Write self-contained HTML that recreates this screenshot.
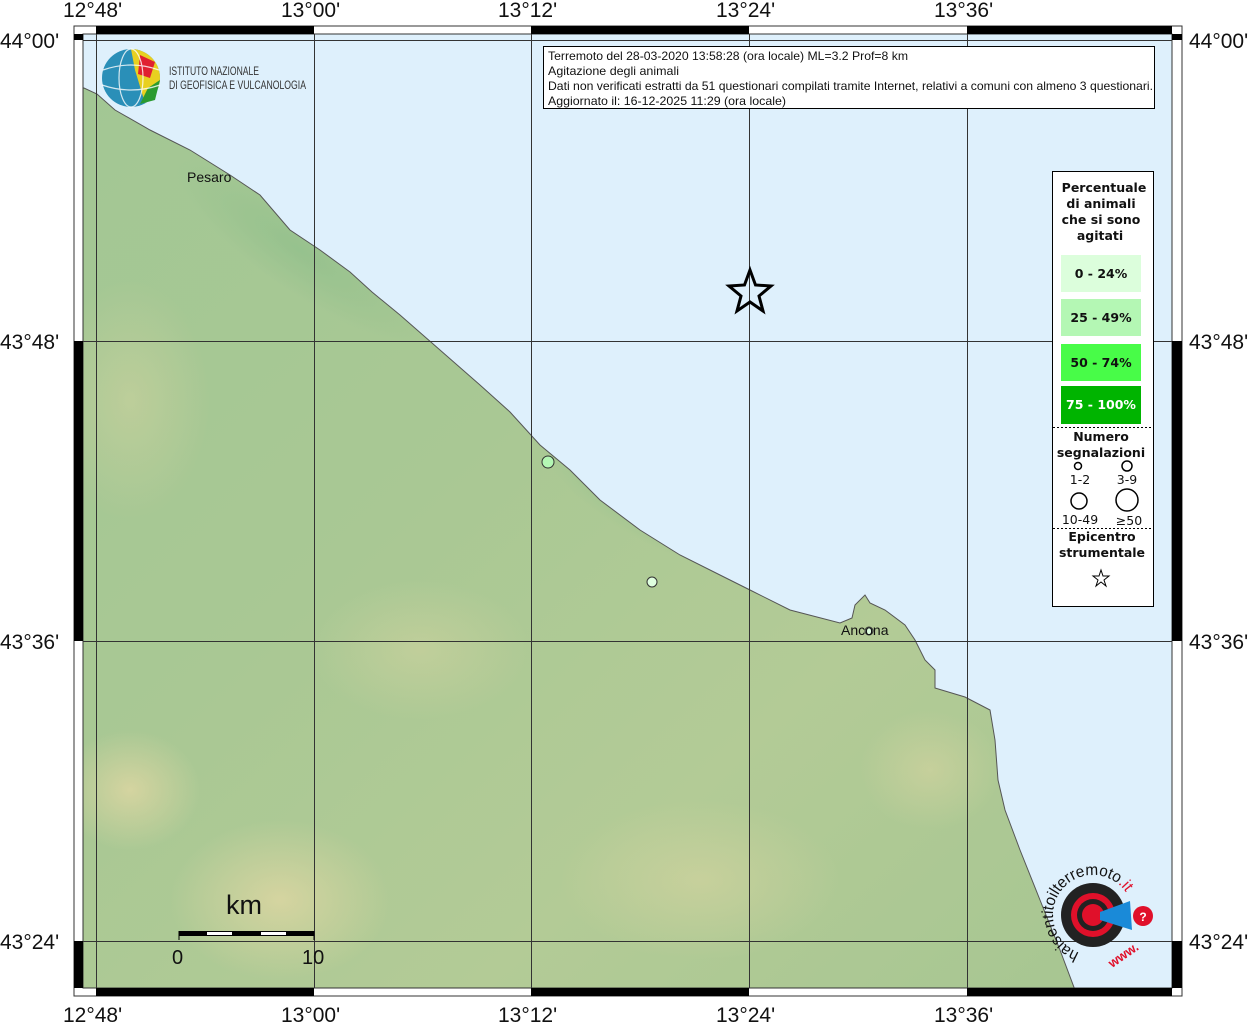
<!DOCTYPE html>
<html><head><meta charset="utf-8"><style>
html,body{margin:0;padding:0;background:#fff;width:1255px;height:1024px;overflow:hidden}
svg{display:block}
</style></head><body>
<svg width="1255" height="1024" xmlns="http://www.w3.org/2000/svg" font-family="Liberation Sans, sans-serif">
<defs>
<linearGradient id="land" x1="0" y1="0" x2="1" y2="1">
<stop offset="0" stop-color="#a2c794"/>
<stop offset="0.4" stop-color="#a9c894"/>
<stop offset="0.7" stop-color="#b3cb96"/>
<stop offset="1" stop-color="#a7c692"/>
</linearGradient>
<radialGradient id="tan1" cx="0.5" cy="0.5" r="0.5"><stop offset="0" stop-color="#dcd6a2" stop-opacity="0.85"/><stop offset="1" stop-color="#dcd6a2" stop-opacity="0"/></radialGradient>
<radialGradient id="grn" cx="0.5" cy="0.5" r="0.5"><stop offset="0" stop-color="#92c08c" stop-opacity="0.8"/><stop offset="1" stop-color="#92c08c" stop-opacity="0"/></radialGradient>
<clipPath id="mapclip"><rect x="83" y="34" width="1089" height="954"/></clipPath>
</defs>
<rect x="83" y="34" width="1089" height="954" fill="#def0fc"/>
<g clip-path="url(#mapclip)">
<clipPath id="landclip"><path id="coast" d="M70,88 L84,88 L97,94 L115,110 L150,130 L190,150 L230,175 L260,195 L290,230 L320,250 L350,272 L372,292 L400,315 L440,350 L480,385 L510,412 L540,445 L570,470 L600,500 L640,530 L680,555 L720,575 L750,590 L790,610 L840,623 L852,618 L855,605 L865,595 L870,603 L885,610 L905,625 L915,640 L925,660 L935,670 L935,688 L965,697 L990,710 L995,740 L998,780 L1005,810 L1020,850 L1040,900 L1060,950 L1075,990 L70,990 Z"/></clipPath>
<g clip-path="url(#landclip)">
<rect x="70" y="80" width="1010" height="910" fill="url(#land)"/>
<ellipse cx="130" cy="790" rx="70" ry="60" fill="url(#tan1)"/>
<ellipse cx="280" cy="900" rx="110" ry="80" fill="url(#tan1)"/>
<ellipse cx="130" cy="400" rx="80" ry="120" fill="url(#tan1)" opacity="0.5"/>
<ellipse cx="700" cy="880" rx="140" ry="80" fill="url(#tan1)" opacity="0.6"/>
<ellipse cx="930" cy="770" rx="70" ry="60" fill="url(#tan1)" opacity="0.6"/>
<ellipse cx="420" cy="650" rx="110" ry="70" fill="url(#tan1)" opacity="0.5"/>
<ellipse cx="650" cy="500" rx="120" ry="40" fill="url(#grn)" transform="rotate(30 650 500)"/>
<ellipse cx="300" cy="250" rx="150" ry="40" fill="url(#grn)" transform="rotate(35 300 250)"/>
</g>
<use href="#coast" fill="none" stroke="#555" stroke-width="1"/>
</g>
<g stroke="#333" stroke-width="1">
<line x1="96.5" y1="34" x2="96.5" y2="988"/><line x1="314.5" y1="34" x2="314.5" y2="988"/><line x1="531.5" y1="34" x2="531.5" y2="988"/><line x1="749.5" y1="34" x2="749.5" y2="988"/><line x1="967.5" y1="34" x2="967.5" y2="988"/>
<line x1="83" y1="40.5" x2="1172" y2="40.5"/><line x1="83" y1="341.5" x2="1172" y2="341.5"/><line x1="83" y1="641.5" x2="1172" y2="641.5"/><line x1="83" y1="941.5" x2="1172" y2="941.5"/>
</g>
<rect x="74" y="26" width="1108" height="970" fill="none" stroke="#333" stroke-width="1"/>
<rect x="83" y="34" width="1089" height="954" fill="none" stroke="#333" stroke-width="1"/>
<g fill="#000">
<rect x="96" y="26" width="218" height="8"/><rect x="531" y="26" width="218" height="8"/><rect x="967" y="26" width="205" height="8"/>
<rect x="96" y="988" width="218" height="8"/><rect x="531" y="988" width="218" height="8"/><rect x="967" y="988" width="205" height="8"/>
<rect x="74" y="34" width="9" height="6"/><rect x="74" y="341" width="9" height="300"/><rect x="74" y="941" width="9" height="47"/>
<rect x="1172" y="34" width="10" height="6"/><rect x="1172" y="341" width="10" height="300"/><rect x="1172" y="941" width="10" height="47"/>
</g>
<g font-size="21" fill="#111">
<text x="63" y="17">12°48'</text><text x="281" y="17">13°00'</text><text x="498" y="17">13°12'</text><text x="716" y="17">13°24'</text><text x="934" y="17">13°36'</text>
<text x="63" y="1022">12°48'</text><text x="281" y="1022">13°00'</text><text x="498" y="1022">13°12'</text><text x="716" y="1022">13°24'</text><text x="934" y="1022">13°36'</text>
<text x="0" y="48">44°00'</text><text x="0" y="349">43°48'</text><text x="0" y="649">43°36'</text><text x="0" y="949">43°24'</text>
<text x="1189" y="48">44°00'</text><text x="1189" y="349">43°48'</text><text x="1189" y="649">43°36'</text><text x="1189" y="949">43°24'</text>
</g>
<circle cx="131" cy="78" r="29" fill="#2a8fb8"/>
<path d="M131,49 A29,29 0 0 1 160,78 A29,29 0 0 1 145,103 L135,70 Z" fill="#e8d020"/>
<path d="M140,55 L155,62 L150,78 L138,74 Z" fill="#e02030"/>
<path d="M148,88 L160,80 L155,100 L140,104 Z" fill="#2a9a30"/>
<g stroke="#fff" stroke-width="1.2" fill="none" opacity="0.8"><ellipse cx="131" cy="78" rx="12" ry="29"/><path d="M103,70 Q131,60 159,70 M102,85 Q131,95 160,85"/></g>
<text x="169" y="75" font-size="12" fill="#333" textLength="90" lengthAdjust="spacingAndGlyphs">ISTITUTO NAZIONALE</text>
<text x="169" y="89" font-size="12" fill="#333" textLength="137" lengthAdjust="spacingAndGlyphs">DI GEOFISICA E VULCANOLOGIA</text>
<rect x="543.5" y="46.5" width="611" height="62" fill="#fff" stroke="#000"/>
<g font-size="12" fill="#111">
<text x="548" y="60" textLength="360" lengthAdjust="spacingAndGlyphs">Terremoto del 28-03-2020 13:58:28 (ora locale) ML=3.2 Prof=8 km</text>
<text x="548" y="75" textLength="131" lengthAdjust="spacingAndGlyphs">Agitazione degli animali</text>
<text x="548" y="90" textLength="605" lengthAdjust="spacingAndGlyphs">Dati non verificati estratti da 51 questionari compilati tramite Internet, relativi a comuni con almeno 3 questionari.</text>
<text x="548" y="105" textLength="238" lengthAdjust="spacingAndGlyphs">Aggiornato il: 16-12-2025 11:29 (ora locale)</text>
</g>
<text x="187" y="182" font-size="14" fill="#111">Pesaro</text>
<circle cx="869" cy="631" r="4" fill="#dfffdf" stroke="#333"/>
<text x="841" y="635" font-size="14" fill="#111">Ancona</text>
<circle cx="548" cy="462" r="6" fill="#b4f7b4" stroke="#333"/>
<circle cx="652" cy="582" r="5" fill="#dfffdf" stroke="#333"/>
<polygon points="750,270 755.5,285 771,286 759,296 763,311 750,302 737,311 741,296 729,286 744.5,285" fill="none" stroke="#000" stroke-width="3"/>
<rect x="1052.5" y="171.5" width="101" height="435" fill="#fff" stroke="#000"/>
<g font-weight="bold" fill="#111" text-anchor="middle" font-family="DejaVu Sans, sans-serif">
<text x="1104" y="192" font-size="12.5">Percentuale</text><text x="1101" y="208" font-size="12.5">di animali</text><text x="1101" y="224" font-size="12.5">che si sono</text><text x="1100" y="240" font-size="12.5">agitati</text>
<rect x="1061" y="255" width="80" height="37" fill="#dcfedc"/><text x="1101" y="278" font-size="12.5">0 - 24%</text>
<rect x="1061" y="299" width="80" height="37" fill="#b4f7b4"/><text x="1101" y="322" font-size="12.5">25 - 49%</text>
<rect x="1061" y="344" width="80" height="37" fill="#48fc48"/><text x="1101" y="367" font-size="12.5">50 - 74%</text>
<rect x="1061" y="386" width="80" height="38" fill="#00b400"/><text x="1101" y="409" font-size="12.5" fill="#fff">75 - 100%</text>
<line x1="1053" y1="427.5" x2="1153" y2="427.5" stroke="#000" stroke-dasharray="2,2"/>
<text x="1101" y="441" font-size="12.5">Numero</text><text x="1101" y="457" font-size="12.5">segnalazioni</text>
<line x1="1053" y1="528.5" x2="1153" y2="528.5" stroke="#000" stroke-dasharray="2,2"/>
<text x="1102" y="541" font-size="12.5">Epicentro</text><text x="1102" y="557" font-size="12.5">strumentale</text>
</g>
<g fill="none" stroke="#000" stroke-width="1.5">
<circle cx="1078" cy="466" r="3.5"/><circle cx="1127" cy="466" r="5"/><circle cx="1079" cy="501" r="8"/><circle cx="1127" cy="500" r="11"/>
</g>
<g font-size="12.5" fill="#111" text-anchor="middle" font-family="DejaVu Sans, sans-serif">
<text x="1080" y="484">1-2</text><text x="1127" y="484">3-9</text><text x="1080" y="524">10-49</text><text x="1129" y="525">≥50</text>
</g>
<polygon points="1101,570 1103,576 1109,576 1104,580 1106,586 1101,582 1096,586 1098,580 1093,576 1099,576" fill="none" stroke="#000" stroke-width="1"/>
<text x="226" y="914" font-size="27" fill="#111">km</text>
<rect x="179" y="931" width="135" height="5" fill="#000"/>
<rect x="207" y="932" width="25" height="3" fill="#fff"/><rect x="261" y="932" width="25" height="3" fill="#fff"/>
<line x1="179" y1="931" x2="179" y2="940" stroke="#000"/><line x1="314" y1="931" x2="314" y2="940" stroke="#000"/>
<text x="172" y="964" font-size="20" fill="#111">0</text><text x="302" y="964" font-size="20" fill="#111">10</text>
<circle cx="1093" cy="915" r="32" fill="#222"/>
<circle cx="1093" cy="915" r="22" fill="#e0102a"/>
<circle cx="1093" cy="915" r="16" fill="#222"/>
<circle cx="1093" cy="915" r="11" fill="#e0102a"/>
<path d="M1100,912 L1130,901 L1132,930 L1100,920 Z" fill="#1a8ad8"/>
<circle cx="1143" cy="916" r="10" fill="#e0102a"/><text x="1143" y="921" font-size="12" fill="#fff" text-anchor="middle" font-weight="bold">?</text>
<path id="arc1" d="M1079.3,952.6 A40,40 0 1 1 1127.6,895" fill="none"/>
<text font-size="16" fill="#111"><textPath href="#arc1" textLength="150" lengthAdjust="spacingAndGlyphs">haisentitoilterremoto<tspan fill="#e0102a">.it</tspan></textPath></text>
<text x="1108" y="965" font-size="13" fill="#e0102a" font-weight="bold" transform="rotate(-35 1115 960)">www.</text>
</svg>
</body></html>
